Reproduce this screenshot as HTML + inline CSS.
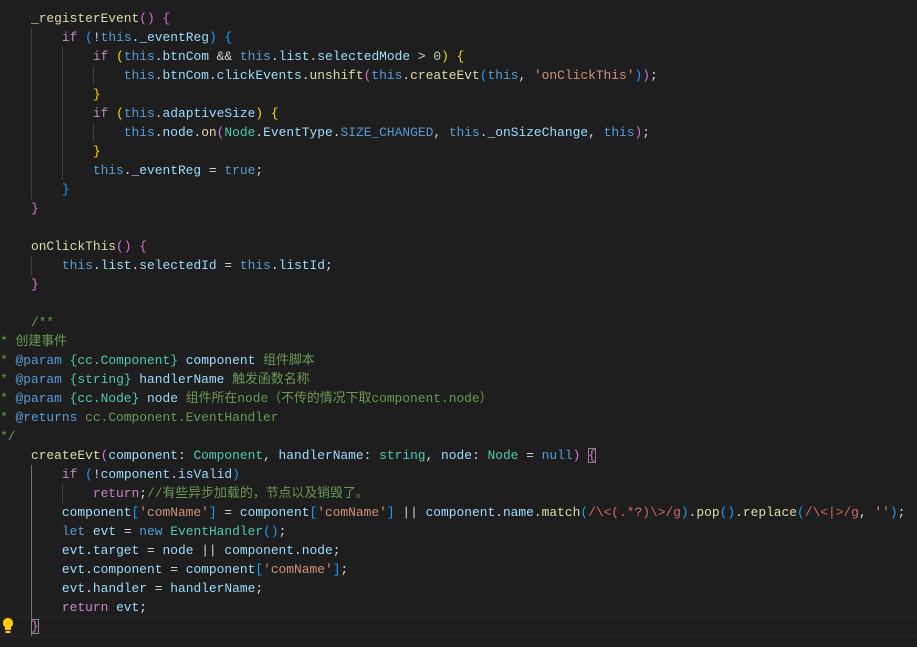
<!DOCTYPE html>
<html><head><meta charset="utf-8"><style>
html,body{margin:0;padding:0;background:#1e1e1e;width:917px;height:647px;overflow:hidden}
#c{position:absolute;left:0;top:9px;font-family:"Liberation Mono","Noto Sans CJK SC",monospace;font-size:12.9px;line-height:19px;color:#d4d4d4;white-space:pre}
.k{color:#c586c0}.t{color:#569cd6}.p{color:#9cdcfe}.f{color:#dcdcaa}.y{color:#4ec9b0}.s{color:#ce9178}.n{color:#b5cea8}.c{color:#6a9955}.r{color:#d16969}.e{color:#d7ba7d}
.g{color:#ffd700}.m{color:#da70d6}.b{color:#179fff}
.box{outline:1px solid #888;outline-offset:-1px}
.gd{position:absolute;width:1px;background:#404040}
.cur{position:absolute;left:0;width:917px;top:617px;height:18px;border-top:1px solid #282828;border-bottom:1px solid #282828}
</style></head><body>
<div class="cur"></div>
<div class="gd" style="left:31px;top:28px;height:171px"></div>
<div class="gd" style="left:62px;top:47px;height:133px"></div>
<div class="gd" style="left:93px;top:66px;height:19px"></div>
<div class="gd" style="left:93px;top:123px;height:19px"></div>
<div class="gd" style="left:31px;top:256px;height:19px"></div>
<div class="gd" style="left:31px;top:465px;height:171px;background:#707070"></div>
<div class="gd" style="left:62px;top:484px;height:19px"></div>
<svg style="position:absolute;left:2px;top:617px" width="12" height="17" viewBox="0 0 12 17"><path d="M6 1a5 5 0 0 0-3 9v3h6v-3a5 5 0 0 0-3-9z" fill="#ffcc00"/><rect x="3.5" y="14" width="5" height="2" fill="#ffcc00"/></svg>
<div id="c">    <span class="f">_registerEvent</span><span class="m">()</span> <span class="m">{</span>
        <span class="k">if</span> <span class="b">(</span>!<span class="t">this</span>.<span class="p">_eventReg</span><span class="b">)</span> <span class="b">{</span>
            <span class="k">if</span> <span class="g">(</span><span class="t">this</span>.<span class="p">btnCom</span> &amp;&amp; <span class="t">this</span>.<span class="p">list</span>.<span class="p">selectedMode</span> &gt; <span class="n">0</span><span class="g">)</span> <span class="g">{</span>
                <span class="t">this</span>.<span class="p">btnCom</span>.<span class="p">clickEvents</span>.<span class="f">unshift</span><span class="m">(</span><span class="t">this</span>.<span class="f">createEvt</span><span class="b">(</span><span class="t">this</span>, <span class="s">'onClickThis'</span><span class="b">)</span><span class="m">)</span>;
            <span class="g">}</span>
            <span class="k">if</span> <span class="g">(</span><span class="t">this</span>.<span class="p">adaptiveSize</span><span class="g">)</span> <span class="g">{</span>
                <span class="t">this</span>.<span class="p">node</span>.<span class="f">on</span><span class="m">(</span><span class="y">Node</span>.<span class="p">EventType</span>.<span class="t">SIZE_CHANGED</span>, <span class="t">this</span>.<span class="p">_onSizeChange</span>, <span class="t">this</span><span class="m">)</span>;
            <span class="g">}</span>
            <span class="t">this</span>.<span class="p">_eventReg</span> = <span class="t">true</span>;
        <span class="b">}</span>
    <span class="m">}</span>

    <span class="f">onClickThis</span><span class="m">()</span> <span class="m">{</span>
        <span class="t">this</span>.<span class="p">list</span>.<span class="p">selectedId</span> = <span class="t">this</span>.<span class="p">listId</span>;
    <span class="m">}</span>

    <span class="c">/**</span>
<span class="c">* 创建事件</span>
<span class="c">* <span class="t">@param</span> <span class="y">{cc.Component}</span> <span class="p">component</span> 组件脚本</span>
<span class="c">* <span class="t">@param</span> <span class="y">{string}</span> <span class="p">handlerName</span> 触发函数名称</span>
<span class="c">* <span class="t">@param</span> <span class="y">{cc.Node}</span> <span class="p">node</span> 组件所在node（不传的情况下取component.node）</span>
<span class="c">* <span class="t">@returns</span> cc.Component.EventHandler</span>
<span class="c">*/</span>
    <span class="f">createEvt</span><span class="m">(</span><span class="p">component</span>: <span class="y">Component</span>, <span class="p">handlerName</span>: <span class="y">string</span>, <span class="p">node</span>: <span class="y">Node</span> = <span class="t">null</span><span class="m">)</span> <span class="m box">{</span>
        <span class="k">if</span> <span class="b">(</span>!<span class="p">component</span>.<span class="p">isValid</span><span class="b">)</span>
            <span class="k">return</span>;<span class="c">//有些异步加载的，节点以及销毁了。</span>
        <span class="p">component</span><span class="b">[</span><span class="s">'comName'</span><span class="b">]</span> = <span class="p">component</span><span class="b">[</span><span class="s">'comName'</span><span class="b">]</span> || <span class="p">component</span>.<span class="p">name</span>.<span class="f">match</span><span class="b">(</span><span class="r">/\&lt;(.*?)\&gt;/g</span><span class="b">)</span>.<span class="f">pop</span><span class="b">()</span>.<span class="f">replace</span><span class="b">(</span><span class="r">/\&lt;|&gt;/g</span>, <span class="s">''</span><span class="b">)</span>;
        <span class="t">let</span> <span class="p">evt</span> = <span class="t">new</span> <span class="y">EventHandler</span><span class="b">()</span>;
        <span class="p">evt</span>.<span class="p">target</span> = <span class="p">node</span> || <span class="p">component</span>.<span class="p">node</span>;
        <span class="p">evt</span>.<span class="p">component</span> = <span class="p">component</span><span class="b">[</span><span class="s">'comName'</span><span class="b">]</span>;
        <span class="p">evt</span>.<span class="p">handler</span> = <span class="p">handlerName</span>;
        <span class="k">return</span> <span class="p">evt</span>;
    <span class="m box">}</span></div>
</body></html>
